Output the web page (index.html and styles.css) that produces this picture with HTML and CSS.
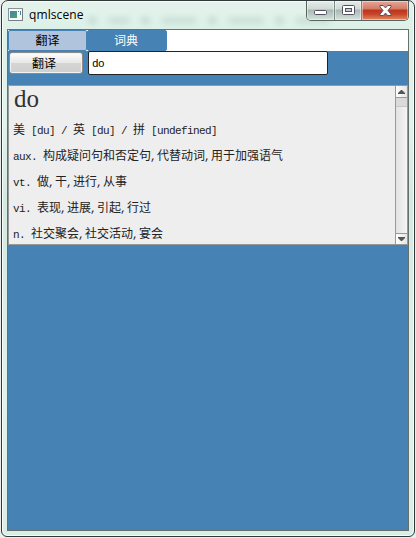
FILE: index.html
```html
<!DOCTYPE html>
<html lang="zh-CN">
<head>
<meta charset="utf-8">
<title>qmlscene</title>
<link rel="stylesheet" href="styles.css">
</head>
<body>
<div class="window">
  <header class="titlebar">
    <svg class="app-icon" width="16" height="14" viewBox="0 0 16 14">
      <defs><linearGradient id="pic" x1="0" y1="0" x2="1" y2="1"><stop offset="0" stop-color="#4583b0"/><stop offset="1" stop-color="#4fa269"/></linearGradient></defs>
      <rect x=".5" y=".5" width="14" height="12" fill="#f8fafa" stroke="#8b9295"/>
      <path d="M14.500 1v11.500H1" fill="none" stroke="#777d80"/>
      <rect x="2" y="3" width="7" height="7" fill="url(#pic)"/>
      <path d="M10 3.500h1M12.500 3v4" stroke="#477fa5" stroke-width="1"/>
    </svg>
    <span class="title">qmlscene</span>
    <span class="haze"><i></i><i class="wide"></i><i></i><i class="wider"></i><i></i><i class="wider"></i><i></i><i class="wider"></i></span>
    <div class="controls">
      <span class="control min"><svg width="13" height="6"><rect x=".5" y=".5" width="12" height="4" rx="1" fill="#fff" stroke="#50505f"/></svg></span>
      <span class="control max"><svg width="13" height="11"><rect x=".5" y=".5" width="12" height="9" rx="1" fill="#fff" stroke="#50505f"/><rect x="3.500" y="3.500" width="6" height="3" fill="#c3cbcb" stroke="#50505f"/></svg></span>
      <span class="control close"><svg width="13" height="11"><path d="M1 .5h3.300l2.200 2.400L8.700.5H12v1.300L9 5.500l3 3.700v1.300H8.700L6.500 8.100l-2.200 2.400H1V9.200l3-3.700-3-3.700z" fill="#fff" stroke="#59505b"/></svg></span>
    </div>
  </header>
  <main class="client">
    <nav class="tabs"><span class="tab active">翻译</span><span class="tab">词典</span></nav>
    <div class="toolbar"><button class="translate">翻译</button><div class="query"><span class="l">do</span></div></div>
    <section class="result">
      <div class="text">
        <h1>do</h1>
        <p>美<span class="l"> [du] / </span>英<span class="l"> [du] / </span>拼<span class="l"> [undefined]</span></p>
        <p><span class="l">aux. </span>构成疑问句和否定句<span class="l c">,</span>代替动词<span class="l c">,</span>用于加强语气</p>
        <p><span class="l">vt. </span>做<span class="l c">,</span>干<span class="l c">,</span>进行<span class="l c">,</span>从事</p>
        <p><span class="l">vi. </span>表现<span class="l c">,</span>进展<span class="l c">,</span>引起<span class="l c">,</span>行过</p>
        <p><span class="l">n. </span>社交聚会<span class="l c">,</span>社交活动<span class="l c">,</span>宴会</p>
      </div>
      <div class="scrollbar">
        <span class="arrow up"><svg width="7" height="4"><path d="M0 4V3L3 0h1l3 3v1z" fill="#555"/></svg></span>
        <span class="thumb"></span>
        <span class="arrow down"><svg width="7" height="4"><path d="M0 0v1l3 3h1l3-3V0z" fill="#555"/></svg></span>
      </div>
    </section>
  </main>
</div>
</body>
</html>
```
FILE: styles.css
```css
* { box-sizing: border-box; }
body {
  margin: 0;
  width: 416px;
  height: 538px;
  padding: 0 1px 1px;
  overflow: hidden;
  background: #e9eeec;
  font: 12px/16px "Liberation Sans", "Noto Sans CJK SC", sans-serif;
  color: #222;
}
.window {
  height: 537px;
  padding: 0 5px 5px;
  border: 1px solid #30383a;
  border-radius: 7px 7px 6px 6px;
  background: linear-gradient(#e4f3ec, #dcf1e8 28px, #e0f3ec 120px, #d4e9e1 200px, #dff3ea 400px, #d9efe6);
  box-shadow: inset 0 0 0 1px #f5fcfa;
}
.titlebar {
  position: relative;
  display: flex;
  height: 28px;
  padding-left: 1px;
}
.app-icon { margin-top: 7px; }
.title {
  margin: 5px 0 0 5px;
  font: 12px/17px "Open Sans", sans-serif;
  letter-spacing: .1px;
  color: #000;
}
.haze {
  position: absolute;
  left: 82px;
  top: 15px;
  display: flex;
  gap: 13px;
  width: 320px;
  padding: 2px 0;
  overflow: hidden;
  filter: blur(3px);
  opacity: .65;
}
.haze i { flex: none; width: 7px; height: 5px; background: #9fb9b2; }
.haze .wide { width: 20px; background: #b3ccc4; }
.haze .wider { width: 34px; background: #b3ccc4; }
.controls {
  position: relative;
  display: flex;
  width: 103px;
  height: 20px;
  margin: 0 0 0 auto;
  border: 1px solid #59635f;
  border-top: 0;
  border-radius: 0 0 5px 5px;
  overflow: hidden;
}
.control {
  display: flex;
  align-items: center;
  justify-content: center;
  border-right: 1px solid #7b8985;
  background: linear-gradient(#e5ece9, #cfd9d5 8px, #aab7b4 9px, #d4e3dc);
  box-shadow: inset 0 0 0 1px rgba(255,255,255,.45);
}
.min { width: 28px; padding-top: 5px; }
.max { width: 27px; }
.close {
  flex: 1;
  border: 0;
  background: linear-gradient(#e4a797, #d47a66 8px, #bd351b 9px, #c64328 13px, #e18b63);
}
.client {
  height: 502px;
  border: 1px solid #68706e;
  background: #4682b4;
}
.tabs { display: flex; height: 21px; background: #fff; }
.tab {
  width: 80px;
  padding: 2px 2px 0 0;
  border: 1px solid #4682b4;
  border-radius: 2px;
  background: #4682b4;
  text-align: center;
  color: #fff;
}
.tab.active { width: 79px; padding-right: 0; background: #b0c4de; color: #000; }
.toolbar { display: flex; height: 34px; }
.translate {
  width: 74px;
  height: 22px;
  margin: 1px 5px 0 1px;
  padding: 1px 4px 0 0;
  border: 1px solid #8b8b8b;
  border-radius: 3px;
  background: linear-gradient(#fefefe, #e7e7e7 48%, #d5d5d5 52%, #cfcfcf);
  box-shadow: inset 0 0 0 1px #f2f2f2;
  font: inherit;
  color: #000;
}
.query {
  width: 240px;
  height: 24px;
  padding: 3px;
  border: 1px solid #222;
  border-radius: 2px;
  background: #fff;
  color: #000;
}
.l {
  font-family: "Liberation Mono", monospace;
  font-size: 11px;
  letter-spacing: -.6px;
  white-space: pre;
}
.c { margin: 0 1px 0 -1px; }
.result {
  display: flex;
  height: 160px;
  border: 1px solid #999;
  background: #eee;
}
.text { flex: 1; padding: 0 4px; overflow: hidden; }
h1 {
  height: 31px;
  margin: 0;
  padding-left: 1px;
  font: 25px/26px "Liberation Serif", serif;
  color: #333;
}
p { height: 26px; margin: 0; line-height: 26px; white-space: nowrap; }
.scrollbar {
  display: flex;
  flex-direction: column;
  width: 12px;
  border-left: 1px solid #999;
  background: linear-gradient(90deg, #e2e2e2, #f5f5f5);
}
.arrow {
  display: flex;
  align-items: center;
  justify-content: center;
  height: 12px;
  background: linear-gradient(90deg, #fff, #e5e5e5);
}
.up { border-bottom: 1px solid #999; }
.down { height: 11px; margin-top: auto; border-top: 1px solid #999; }
.thumb { height: 9px; background: #dadada; border-bottom: 1px solid #c8c8c8; }
```
